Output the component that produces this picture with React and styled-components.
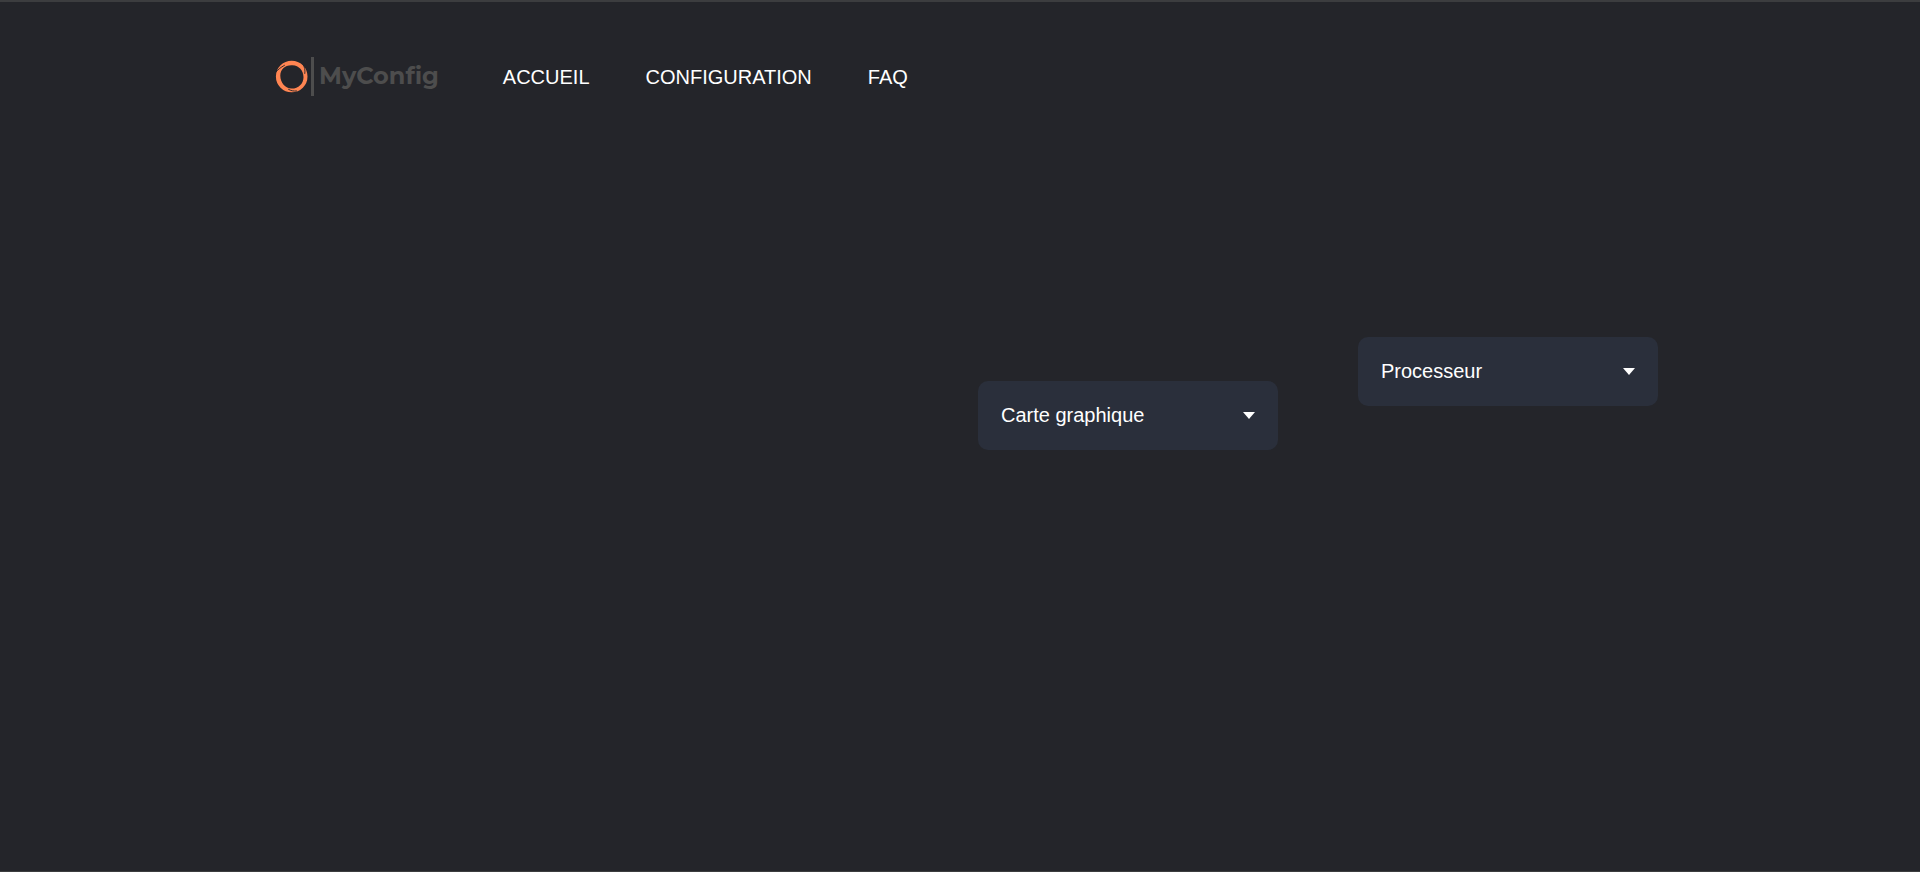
import React from "react";
import styled, { createGlobalStyle } from "styled-components";

const GlobalStyle = createGlobalStyle`
  *, *::before, *::after { box-sizing: border-box; }
  body {
    margin: 0;
    background: #24252a;
    color: #fff;
    font-family: Arial, "Liberation Sans", sans-serif;
    font-size: 20px;
  }
`;

const Page = styled.div`
  min-height: 100vh;
  border-top: 2px solid #3c3d3f;
  border-bottom: 1px solid #3c3d3f;
`;

const Header = styled.header`
  display: flex;
  flex-wrap: wrap;
  align-items: center;
  gap: 20px 64px;
  padding: 54px 14% 0 275px;

  @media (max-width: 1200px) {
    padding: 40px 32px 0;
  }
`;

const Brand = styled.a`
  display: flex;
  align-items: center;
  gap: 5px;
  color: #4d4d4d;
  text-decoration: none;
`;

const Mark = styled.svg`
  display: block;
  width: 39px;
  height: 41px;
`;

const BrandName = styled.span`
  padding-bottom: 2px;
  font-family: Montserrat, Inter, sans-serif;
  font-size: 24px;
  line-height: 36px;
  font-weight: 700;
`;

const Nav = styled.nav`
  display: flex;
  flex-wrap: wrap;
  gap: 16px 56px;
`;

const NavLink = styled.a`
  color: #fff;
  line-height: 24px;
  text-decoration: none;
`;

const Selectors = styled.main`
  display: flex;
  flex-wrap: wrap;
  justify-content: flex-end;
  align-items: flex-start;
  gap: 80px;
  padding: 240px 262px 64px;

  @media (max-width: 1200px) {
    padding: 120px 32px 64px;
  }
`;

const SelectBox = styled.div`
  position: relative;
  width: 300px;
  margin-top: ${({ $drop }) => $drop || 0}px;

  &::after {
    content: "";
    position: absolute;
    top: 31px;
    right: 23px;
    border: 6px solid transparent;
    border-top: 7px solid #fff;
    border-bottom: 0;
    pointer-events: none;
  }
`;

const Select = styled.select`
  appearance: none;
  display: block;
  width: 100%;
  height: 69px;
  padding: 0 48px 2px 23px;
  border: 0;
  border-radius: 10px;
  background: #2a2f3b;
  color: #fff;
  font: inherit;
  cursor: pointer;
`;

const links = ["Accueil", "Configuration", "FAQ"];

const components = [
  { name: "Carte graphique", drop: 44 },
  { name: "Processeur", drop: 0 },
];

function Logo() {
  return (
    <Mark viewBox="0 0 39 41" aria-hidden="true">
      <path
        fill="#ff8552"
        fillRule="evenodd"
        d="M16.7 4.7a15.8 15.8 0 1 1 0 31.6a15.8 15.8 0 1 1 0-31.6ZM17.5 9.3C10 8.8 5.3 13.5 5.3 19.5c0 7.3 5 13 11.4 13.1 6.8 0 11.8-5 11.8-11.4 0-6.700-4.500-11.500-11-11.900Z"
      />
      <g fill="none" stroke="#24252a" strokeWidth="0.9" strokeLinecap="round">
        <path d="M1 16C3 13.500 5.500 11.500 9.500 9.300" />
        <path d="M28 8.500C29.700 11 30.300 14 29.800 17.500" />
        <path d="M13.500 33.300C16 34.800 18.500 35.300 21.500 35" />
      </g>
      <path stroke="#4d4d4d" strokeWidth="3" d="M37.5 1v39" />
    </Mark>
  );
}

export default function App() {
  return (
    <>
      <GlobalStyle />
      <Page>
        <Header>
          <Brand href="#accueil">
            <Logo />
            <BrandName>MyConfig</BrandName>
          </Brand>
          <Nav>
            {links.map((label) => (
              <NavLink key={label} href={`#${label.toLowerCase()}`}>
                {label.toUpperCase()}
              </NavLink>
            ))}
          </Nav>
        </Header>
        <Selectors>
          {components.map(({ name, drop }) => (
            <SelectBox key={name} $drop={drop}>
              <Select aria-label={name} defaultValue="">
                <option value="">{name}</option>
              </Select>
            </SelectBox>
          ))}
        </Selectors>
      </Page>
    </>
  );
}
